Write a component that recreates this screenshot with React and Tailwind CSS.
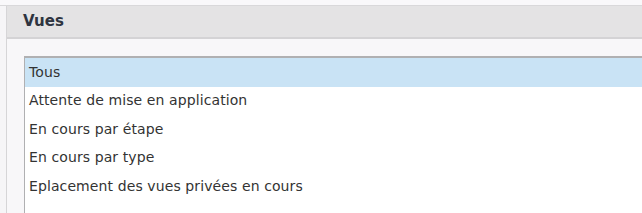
export default function App() {
  const items = [
    'Tous',
    'Attente de mise en application',
    'En cours par étape',
    'En cours par type',
    'Eplacement des vues privées en cours',
  ];

  return (
    <div className="h-[213px] w-[642px] overflow-hidden bg-[#f6f5f7] font-['DejaVu_Sans',sans-serif]">
      <div className="h-[6px] border-b border-[#d9d8da] bg-[#f9f8fa]" />
      <div className="ml-[6px] h-[207px] border-l border-[#d6d5d7]">
        <div className="flex h-[33px] items-center border-b-2 border-[#d4d3d5] bg-[#e4e3e4] pl-[16px] text-[15px] font-bold text-[#2e3440]">
          Vues
        </div>
        <div className="bg-[#f8f7f9] pl-[17px] pt-[17px]">
          <div className="h-[200px] border-l border-t-2 border-[#b0b0b2] bg-white">
            {items.map((label, i) => (
              <div
                key={label}
                className={`flex h-[28.5px] items-center pl-[4px] text-[14px] tracking-[0.1px] text-[#333333] ${
                  i === 0 ? 'bg-[#c9e3f5]' : ''
                }`}
              >
                {label}
              </div>
            ))}
          </div>
        </div>
      </div>
    </div>
  );
}
